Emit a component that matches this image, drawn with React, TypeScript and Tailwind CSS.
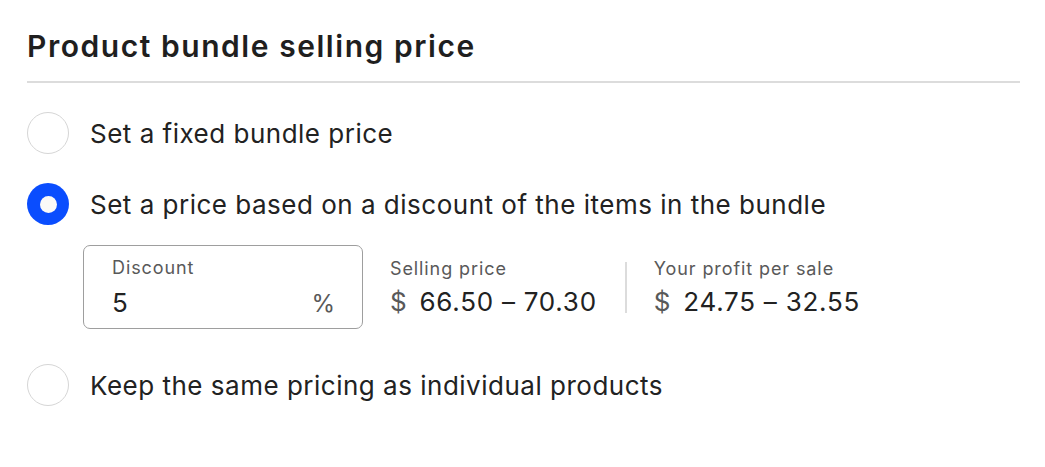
import React from 'react';

const font = { fontFamily: 'Inter, "Noto Sans", sans-serif' };

function Radio({ checked }: { checked?: boolean }) {
  return checked ? (
    <span className="flex h-[42px] w-[42px] shrink-0 items-center justify-center rounded-full bg-[#0a4dfe]">
      <span className="h-[17px] w-[17px] rounded-full bg-[#faf9f7]" />
    </span>
  ) : (
    <span className="h-[42px] w-[42px] shrink-0 rounded-full border border-[#d6d6d6] bg-white" />
  );
}

function Option({ label, checked }: { label: string; checked?: boolean }) {
  return (
    <div className="flex items-center gap-[21px]">
      <Radio checked={checked} />
      <span className="text-[26px] tracking-[0.5px] text-[#222]">{label}</span>
    </div>
  );
}

function Stat({ label, value }: { label: string; value: string }) {
  return (
    <div className="flex flex-col">
      <span className="text-[18px] leading-[22px] tracking-[0.9px] text-[#595959]">{label}</span>
      <span className="mt-[7px] flex items-baseline text-[26px] leading-[30px] tracking-[0.75px] text-[#222]">
        <span className="mr-[12px] text-[#595959]">$</span>
        {value}
      </span>
    </div>
  );
}

export default function App() {
  return (
    <div className="min-h-[467px] bg-white pl-[27px] pr-[25px] pt-[26px]" style={font}>
      <h2 className="text-[30px] font-semibold leading-[40px] tracking-[1.55px] text-[#1f1f1f]">
        Product bundle selling price
      </h2>
      <div className="mt-[15px] h-[2px] bg-[#dcdcdc]" />
      <div className="mt-[29px] flex flex-col">
        <Option label="Set a fixed bundle price" />
        <div className="mt-[29px]">
          <Option label="Set a price based on a discount of the items in the bundle" checked />
        </div>
        <div className="mt-[20px] ml-[56px] flex items-center">
          <div className="flex h-[84px] w-[280px] flex-col rounded-[7px] border border-[#9e9e9e] pl-[28px] pr-[27px] pt-[11px]">
            <span className="text-[18px] leading-[22px] tracking-[0.9px] text-[#595959]">Discount</span>
            <div className="mt-[7px] flex items-baseline justify-between">
              <span className="text-[26px] leading-[30px] text-[#222]">5</span>
              <span className="text-[24px] text-[#595959]">%</span>
            </div>
          </div>
          <div className="ml-[27px] flex items-center">
            <Stat label="Selling price" value="66.50 – 70.30" />
            <div className="ml-[28px] mr-[27px] h-[51px] w-[2px] bg-[#dcdcdc]" />
            <Stat label="Your profit per sale" value="24.75 – 32.55" />
          </div>
        </div>
        <div className="mt-[35px]">
          <Option label="Keep the same pricing as individual products" />
        </div>
      </div>
    </div>
  );
}
